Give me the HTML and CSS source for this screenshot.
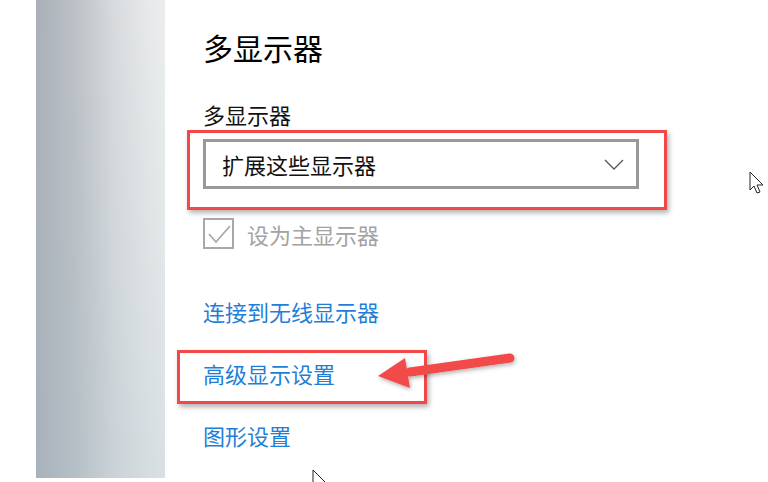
FILE: index.html
```html
<!DOCTYPE html>
<html lang="zh-CN">
<head>
<meta charset="utf-8">
<title>多显示器</title>
<link rel="stylesheet" href="styles.css">
</head>
<body>
<div class="page">
  <div class="strip"></div>
  <div class="panel"></div>
  <main class="content">
    <h1 class="title">多显示器</h1>
    <div class="label">多显示器</div>
    <div class="select">
      <span class="select-text">扩展这些显示器</span>
      <svg class="chevron" width="20" height="11" viewBox="0 0 20 11"><polyline points="1,1 10,10 19,1" fill="none" stroke="#555" stroke-width="1.3"/></svg>
    </div>
    <div class="check-row">
      <span class="checkbox">
        <svg width="26" height="26" viewBox="0 0 26 26"><polyline points="3,13 10,21 24,5" fill="none" stroke="#a8a8a8" stroke-width="1.8"/></svg>
      </span>
      <span class="check-label">设为主显示器</span>
    </div>
    <a class="link link-first">连接到无线显示器</a>
    <a class="link">高级显示设置</a>
    <a class="link">图形设置</a>
  </main>

  <div class="mark mark-select"></div>
  <div class="mark mark-advanced"></div>

  <svg class="arrow" width="160" height="60" viewBox="0 0 160 60">
    <defs>
      <filter id="sh" x="-20%" y="-40%" width="140%" height="180%">
        <feDropShadow dx="1" dy="2" stdDeviation="2" flood-color="#000" flood-opacity="0.3"/>
      </filter>
    </defs>
    <g filter="url(#sh)">
      <line x1="140" y1="10" x2="40" y2="24" stroke="#f24848" stroke-width="9" stroke-linecap="round"/>
      <polygon points="8,28 35,10 40,40" fill="#f24848"/>
    </g>
  </svg>

  <svg class="cursor cursor-right" width="18" height="26" viewBox="0 0 18 26">
    <path d="M1,1 L1,19 L5,15 L8,22 L11,21 L8,14 L14,14 Z" fill="#fff" stroke="#222" stroke-width="1"/>
  </svg>
  <svg class="cursor cursor-bottom" width="18" height="14" viewBox="0 0 18 14">
    <path d="M1,1 L1,19 L5,15 L8,22 L11,21 L8,14 L14,14 Z" fill="#fff" stroke="#222" stroke-width="1"/>
  </svg>
</div>
</body>
</html>
```

FILE: styles.css
```css
* { box-sizing: border-box; }
html, body { margin: 0; padding: 0; background: #fff; }
body {
  width: 768px;
  height: 482px;
  overflow: hidden;
  font-family: "Noto Sans CJK SC", "Noto Sans", sans-serif;
}
.page {
  position: relative;
  display: flex;
  align-items: flex-start;
  width: 768px;
  height: 482px;
}
.strip { width: 36px; height: 478px; flex: none; }
.panel {
  width: 129px;
  height: 478px;
  flex: none;
  background:
    linear-gradient(to bottom, rgba(170,176,186,0.0) 0%, rgba(160,184,196,0.25) 100%),
    linear-gradient(to right, #abb0b8 0%, #bcc1c6 30%, #d9dcde 62%, #e6e8e9 85%, #eceeee 100%);
}
.content {
  display: flex;
  flex-direction: column;
  align-items: flex-start;
  padding: 27px 0 0 38px;
  color: #000;
}
.title {
  margin: 0;
  font-size: 30px;
  font-weight: 400;
  line-height: 40px;
  height: 40px;
}
.label {
  margin-top: 32px;
  font-size: 22px;
  line-height: 30px;
  height: 30px;
  color: #111;
}
.select {
  margin-top: 10px;
  width: 436px;
  height: 50px;
  border: 3px solid #999;
  display: flex;
  align-items: center;
  justify-content: space-between;
  padding: 0 12px 0 16px;
  background: #fff;
}
.select-text { font-size: 22px; line-height: 30px; color: #111; }
.chevron { display: block; }
.check-row {
  margin-top: 29px;
  display: flex;
  align-items: center;
  gap: 13px;
  height: 31px;
}
.checkbox {
  width: 31px;
  height: 31px;
  border: 2px solid #a9a9a9;
  display: flex;
  align-items: center;
  justify-content: center;
}
.checkbox svg { display: block; }
.check-label { font-size: 22px; line-height: 30px; color: #a2a2a2; }
.link {
  margin-top: 32px;
  font-size: 22px;
  line-height: 30px;
  height: 30px;
  color: #1f7fd8;
  text-decoration: none;
}
.link-first { margin-top: 47px; }

.mark {
  position: absolute;
  border: 3px solid #f24848;
  box-shadow: 2px 3px 5px rgba(0,0,0,0.3);
}
.mark-select { left: 187px; top: 130px; width: 480px; height: 80px; }
.mark-advanced { left: 177px; top: 350px; width: 250px; height: 54px; }

.arrow { position: absolute; left: 370px; top: 348px; }
.cursor { position: absolute; }
.cursor-right { left: 749px; top: 171px; }
.cursor-bottom { left: 312px; top: 469px; }
```
